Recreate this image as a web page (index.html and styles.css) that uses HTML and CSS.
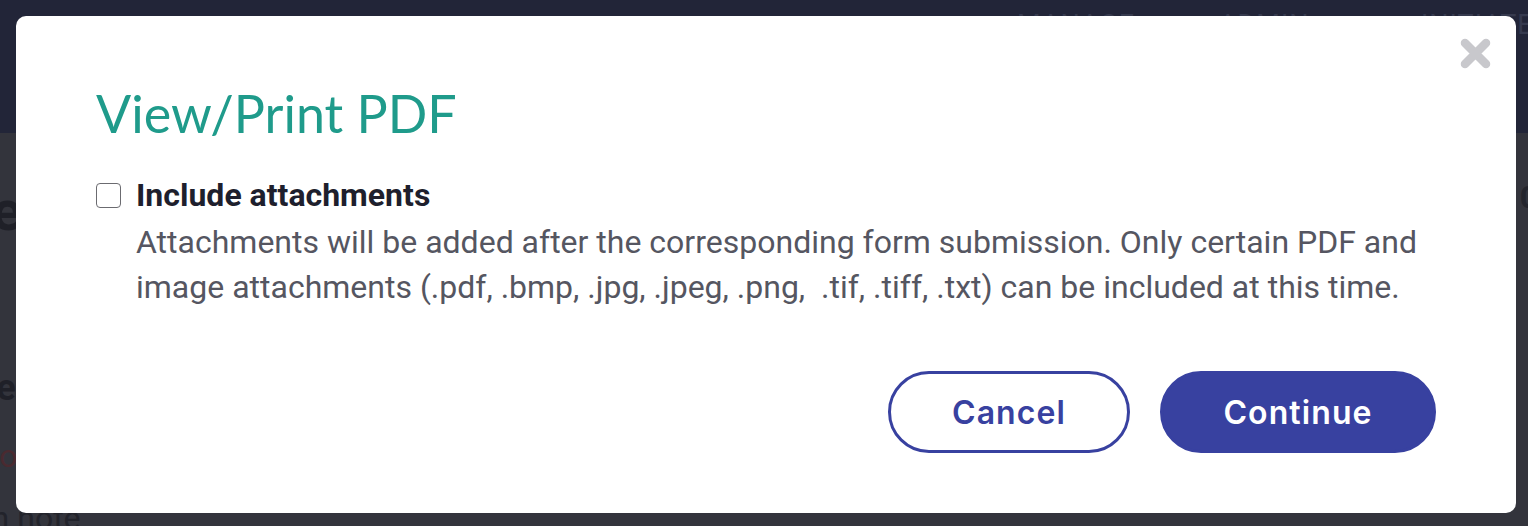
FILE: index.html
```html
<!DOCTYPE html>
<html lang="en">
<head>
<meta charset="utf-8">
<title>View/Print PDF</title>
<link rel="stylesheet" href="styles.css">
</head>
<body>
<div class="page">
  <header class="topbar">
    <nav class="nav">
      <span class="nav-item">MANAGE</span>
      <span class="nav-item">ADMIN</span>
      <span class="nav-item">INITIATE</span>
    </nav>
  </header>
  <main class="content">
    <div class="content-row">
      <h1 class="bg-title">Home</h1>
      <span class="bg-count">10</span>
    </div>
    <p class="bg-sub">Step</p>
    <p class="bg-warn">You</p>
    <p class="bg-note">Written note</p>
  </main>
</div>

<div class="modal" role="dialog" aria-labelledby="modal-title">
  <button class="close" aria-label="Close">
    <svg viewBox="0 0 31 31" width="31" height="31" aria-hidden="true">
      <path d="M5 5 L26 26 M26 5 L5 26" stroke="currentColor" stroke-width="8.5" stroke-linecap="round" fill="none"/>
    </svg>
  </button>
  <h2 class="modal-title" id="modal-title">View/Print PDF</h2>
  <div class="option">
    <span class="checkbox"></span>
    <div class="option-text">
      <div class="option-label">Include attachments</div>
      <p class="option-desc">Attachments will be added after the corresponding form submission. Only certain PDF and image attachments (.pdf, .bmp, .jpg, .jpeg, .png, &nbsp;.tif, .tiff, .txt) can be included at this time.</p>
    </div>
  </div>
  <div class="actions">
    <button class="btn btn-cancel">Cancel</button>
    <button class="btn btn-continue">Continue</button>
  </div>
</div>
</body>
</html>
```

FILE: styles.css
```css
* { box-sizing: border-box; }
html, body { margin: 0; padding: 0; }
body {
  width: 1528px;
  height: 526px;
  overflow: hidden;
  background: #33343c;
  font-family: Roboto, "Liberation Sans", sans-serif;
}

.page { height: 526px; overflow: hidden; }

.topbar {
  height: 133px;
  background: #222538;
  overflow: hidden;
}
.nav {
  display: flex;
  padding: 9px 0 0 1017px;
  white-space: nowrap;
}
.nav-item {
  flex: none;
  width: 202px;
  font-size: 27px;
  line-height: 32px;
  color: #363a4e;
  letter-spacing: 1px;
}

.content {
  color: #22232b;
}
.content-row {
  display: flex;
  justify-content: space-between;
  align-items: flex-start;
}
.bg-title {
  margin: 50px 0 0 -128px;
  font-size: 56px;
  line-height: 56px;
  font-weight: 700;
  color: #1f2028;
}
.bg-count {
  margin: 48px -10px 0 0;
  font-size: 32px;
  line-height: 32px;
  font-weight: 700;
  color: #24252d;
}
.bg-sub {
  margin: 131px 0 0 -38px;
  font-size: 36px;
  line-height: 36px;
  font-weight: 700;
  color: #1f2028;
}
.bg-warn {
  margin: 34px 0 0 -19px;
  font-size: 32px;
  line-height: 32px;
  color: #4a2a30;
}
.bg-note {
  margin: 30px 0 0 -93px;
  font-size: 32px;
  line-height: 32px;
  color: #22232b;
  white-space: nowrap;
}

.modal {
  position: fixed;
  left: 16px;
  top: 16px;
  width: 1500px;
  height: 497px;
  background: #ffffff;
  border-radius: 10px;
  padding: 66px 80px 60px 80px;
}

.close {
  position: absolute;
  top: 22px;
  right: 25px;
  width: 31px;
  height: 31px;
  padding: 0;
  border: 0;
  background: none;
  color: #c8c8cc;
  display: block;
}
.close svg { display: block; }

.modal-title {
  margin: 0;
  font-family: Lato, "Open Sans", sans-serif;
  font-weight: 400;
  font-size: 52px;
  line-height: 62px;
  color: #1f9b8b;
}

.option {
  display: flex;
  gap: 15px;
  margin-top: 29px;
}
.checkbox {
  flex: none;
  width: 25px;
  height: 25px;
  margin-top: 10px;
  border: 1.5px solid #6b6b70;
  border-radius: 4px;
  background: #fff;
}
.option-text { flex: 1; }
.option-label {
  font-family: Roboto, sans-serif;
  font-weight: 700;
  font-size: 32px;
  line-height: 45px;
  color: #1e1f2d;
}
.option-desc {
  margin: 2px 0 0 0;
  font-family: Roboto, sans-serif;
  font-size: 32px;
  line-height: 45px;
  color: #555661;
}

.actions {
  display: flex;
  justify-content: flex-end;
  gap: 30px;
  margin-top: 61px;
}
.btn {
  height: 82px;
  border-radius: 41px;
  border: 3px solid #3841a0;
  font-family: Inter, "Open Sans", sans-serif;
  font-weight: 600;
  font-size: 32px;
  letter-spacing: 1.1px;
}
.btn-cancel {
  width: 242px;
  background: #fff;
  color: #3841a0;
}
.btn-continue {
  width: 276px;
  background: #3841a0;
  color: #fff;
}
```
